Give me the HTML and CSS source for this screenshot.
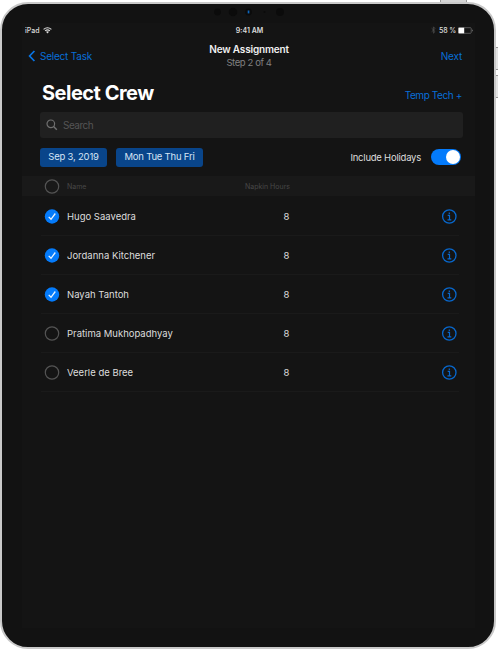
FILE: index.html
```html
<!DOCTYPE html>
<html lang="en">
<head>
<meta charset="utf-8">
<title>New Assignment</title>
<link rel="stylesheet" href="styles.css">
</head>
<body>
<svg width="0" height="0" class="defs">
  <symbol id="check" viewBox="0 0 16 16"><circle cx="8" cy="8.5" r="7.2" fill="#047bfb"/><path d="M4.7 8.9 7 11.3 11.3 5.5" fill="none" stroke="#e9f4ff" stroke-width="1.3"/></symbol>
  <symbol id="empty" viewBox="0 0 16 16"><circle cx="8" cy="8.5" r="6.7" fill="none" stroke="#545454" stroke-width="1.2"/></symbol>
  <symbol id="info" viewBox="0 0 16 16"><circle cx="8.3" cy="8.5" r="6.7" fill="none" stroke="#0868ce" stroke-width="1.3"/><path d="M6.7 7.4H8.5V11.8M6.5 11.9H10.3M8.3 4.5V5.9" fill="none" stroke="#0868ce" stroke-width="1.2"/></symbol>
</svg>
<i class="button power"></i><i class="button volume-up"></i><i class="button volume-down"></i>
<div class="device">
  <div class="sensors">
    <svg width="76" height="12" viewBox="0 0 76 12"><g fill="#0b0b0b"><circle cx="4.5" cy="6" r="3.4"/><circle cx="20" cy="6" r="4.3"/><circle cx="35.5" cy="6" r="3.4"/><circle cx="51.5" cy="6" r="1"/><circle cx="67" cy="6" r="4"/></g><rect x="34.7" y="4.5" width="1.7" height="2.9" fill="#0e66bc"/></svg>
  </div>
  <main class="screen">
    <div class="status">
      <div class="carrier"><span>iPad</span><svg width="9" height="7" viewBox="0 0 9 7"><path d="M.6 2.4Q4.5-.9 8.4 2.4M2.1 3.9Q4.5 2 6.9 3.9" fill="none" stroke="#ddd" stroke-width="1.2"/><path d="M3 4.8Q4.5 3.8 6 4.8L4.5 6.4Z" fill="#ddd"/></svg></div>
      <span class="clock">9:41 AM</span>
      <div class="power-state"><svg width="5" height="8" viewBox="0 0 5 8"><path d="M.6 2.2 4.1 5.5 2.4 7.2V.8L4.1 2.5.6 5.8" fill="none" stroke="#555" stroke-width=".7"/></svg><span>58 %</span><svg width="16" height="7" viewBox="0 0 16 7"><rect x=".5" y=".7" width="12.7" height="5.6" rx=".8" fill="none" stroke="#777" stroke-width=".7"/><rect x=".5" y=".7" width="5.7" height="5.6" fill="#fff"/><path d="M14.2 2.2Q15.3 3.5 14.2 4.8Z" fill="#bbb"/></svg></div>
    </div>
    <nav class="nav">
      <a class="back"><svg width="8" height="12" viewBox="0 0 8 12"><path d="M6.4 1 1.6 6l4.8 5" fill="none" stroke="#0874e4" stroke-width="1.7"/></svg><span>Select Task</span></a>
      <div class="titles"><b>New Assignment</b><span>Step 2 of 4</span></div>
      <a class="next">Next</a>
    </nav>
    <header class="heading"><h1>Select Crew</h1><a>Temp Tech +</a></header>
    <div class="search"><svg width="12" height="12" viewBox="0 0 12 12"><circle cx="4.8" cy="4.8" r="3.8" fill="none" stroke="#707070" stroke-width="1.2"/><path d="m7.6 7.6 3.2 3.2" stroke="#707070" stroke-width="1.4"/></svg><span>Search</span></div>
    <div class="filters"><span class="chip date">Sep 3, 2019</span><span class="chip days">Mon Tue Thu Fri</span><span class="holidays">Include Holidays</span><span class="switch"><i></i></span></div>
    <div class="row columns"><svg class="mark"><use href="#empty"/></svg><span class="name">Name</span><span class="hours">Napkin Hours</span></div>
    <div class="row"><svg class="mark"><use href="#check"/></svg><span class="name">Hugo Saavedra</span><span class="hours">8</span><svg class="info"><use href="#info"/></svg></div>
    <div class="row"><svg class="mark"><use href="#check"/></svg><span class="name">Jordanna Kitchener</span><span class="hours">8</span><svg class="info"><use href="#info"/></svg></div>
    <div class="row"><svg class="mark"><use href="#check"/></svg><span class="name">Nayah Tantoh</span><span class="hours">8</span><svg class="info"><use href="#info"/></svg></div>
    <div class="row"><svg class="mark"><use href="#empty"/></svg><span class="name">Pratima Mukhopadhyay</span><span class="hours">8</span><svg class="info"><use href="#info"/></svg></div>
    <div class="row"><svg class="mark"><use href="#empty"/></svg><span class="name">Veerle de Bree</span><span class="hours">8</span><svg class="info"><use href="#info"/></svg></div>
  </main>
</div>
</body>
</html>
```
FILE: styles.css
```css
* { box-sizing: border-box; }
body { margin: 0; padding: 2px 2px 0 0; height: 649px; background: #fff; overflow: hidden; font-family: Inter, "Liberation Sans", sans-serif; position: relative; }
svg { display: block; flex: none; }
.defs { position: absolute; }
.device { position: relative; height: 647px; border: 2px solid #c9c9c9; border-radius: 28px; background: #121212; padding: 3px 19px 16px 20px; }
.button { position: absolute; background: #d5d5d5; border: 1px solid #999; }
.power { left: 440px; top: 0; width: 27px; height: 4px; border-width: 0 1px; }
.volume-up { left: 492px; top: 47px; width: 6px; height: 23px; border-width: 1px 0; background: #e4e4e4; }
.volume-down { left: 492px; top: 75px; width: 6px; height: 23px; border-width: 1px 0; background: #e4e4e4; }
.sensors { height: 17px; padding-left: 190px; }
.sensors svg { transform: translateX(1px); margin-top: -1px; }
.screen { height: 605px; background: #141414; }
.status { height: 14px; display: grid; grid-template-columns: 1fr 60px 1fr; align-items: center; padding: 0 1px 0 3px; font-size: 7px; font-weight: 500; color: #ddd; }
.carrier, .power-state { display: flex; align-items: center; gap: 3px; }
.power-state { justify-content: flex-end; gap: 2px; letter-spacing: -.15px; }
.power-state svg:first-child { margin-right: 1px; }
.clock { text-align: center; font-weight: 600; }
.nav { height: 38px; display: grid; grid-template-columns: 1fr 100px 1fr; align-items: center; padding: 0 13px 0 6px; font-size: 10px; color: #086fd9; }
.back { display: flex; align-items: center; gap: 4px; margin-top: -1px; }
.back span { letter-spacing: -.22px; }
.titles { display: flex; flex-direction: column; align-items: center; white-space: nowrap; line-height: 14px; color: #808080; font-size: 9.5px; letter-spacing: -.4px; transform: translateX(4px); }
.titles b { color: #f0f0f0; font-size: 10px; font-weight: 600; letter-spacing: -.18px; }
.next { text-align: right; letter-spacing: -.2px; margin-top: -1px; }
.heading { height: 37px; display: flex; justify-content: space-between; align-items: center; padding: 0 13px 0 20px; color: #086fd9; font-size: 10px; letter-spacing: -.4px; }
.heading a { padding-top: 3px; }
h1 { margin: -1px 0 0; color: #fff; font-size: 20px; line-height: 24px; font-weight: 700; letter-spacing: -.5px; }
.search { height: 26px; margin: 0 12px 0 18px; border-radius: 3px; background: #202020; display: flex; align-items: center; gap: 5px; padding-left: 6px; color: #555; font-size: 10px; letter-spacing: -.5px; }
.filters { height: 38px; display: flex; align-items: center; padding: 0 14px 0 18px; color: #ddd; font-size: 9.5px; white-space: nowrap; }
.chip { height: 19px; border-radius: 3px; background: #09458a; color: #d5e4f5; text-align: center; line-height: 18px; letter-spacing: -.2px; }
.date { width: 67px; margin-right: 9px; }
.days { width: 87px; }
.holidays { margin-left: auto; margin-right: 10px; letter-spacing: -.23px; }
.switch { width: 30px; height: 16px; border-radius: 8px; background: #047bfb; display: flex; justify-content: flex-end; padding: 1px; }
.switch i { width: 14px; height: 14px; border-radius: 50%; background: #fff; }
.row { height: 39px; margin: 0 16px 0 19px; border-bottom: 1px solid #1a1a1a; display: grid; grid-template-columns: 26px 168px 103px 1fr; align-items: center; color: #ddd; font-size: 9.5px; white-space: nowrap; }
.mark, .info { width: 16px; height: 16px; }
.mark { margin-left: 3px; }
.info { justify-self: end; margin-right: 2px; }
.hours { text-align: center; }
.columns { height: 20px; margin: 0 0 1px; padding: 0 16px 0 19px; background: #191919; border: 0; color: #484848; font-size: 7px; }
.columns .hours { transform: translateX(-19px); }
```
